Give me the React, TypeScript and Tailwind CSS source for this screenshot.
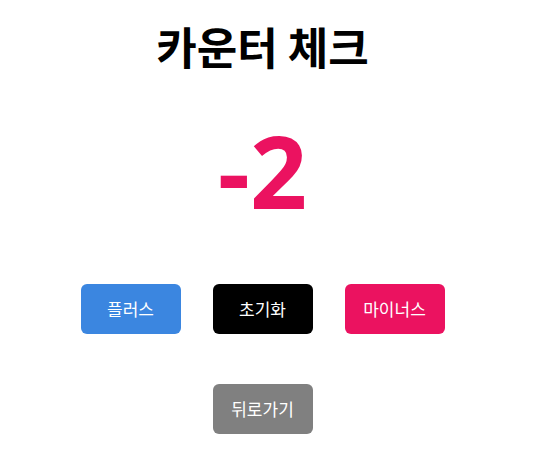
const App = () => {
    return (
        <div
            className="w-full flex flex-col items-center pr-[8px]"
            style={{ fontFamily: '"Noto Sans CJK KR", "Noto Sans", sans-serif' }}
        >
            <h1 className="mt-[18px] text-[44px] font-bold leading-[56px] text-black">카운터 체크</h1>
            <div
                className="mt-[36px] text-[100px] font-bold leading-[120px] text-[#eb1260]"
                style={{ fontFamily: '"Open Sans", sans-serif' }}
            >
                -2
            </div>
            <div className="mt-[54px] flex gap-8">
                <button className="w-[100px] h-[50px] rounded-md bg-[#3b86e0] text-white text-[17px]">플러스</button>
                <button className="w-[100px] h-[50px] rounded-md bg-black text-white text-[17px]">초기화</button>
                <button className="w-[100px] h-[50px] rounded-md bg-[#eb1260] text-white text-[17px]">마이너스</button>
            </div>
            <button className="mt-[50px] w-[100px] h-[50px] rounded-md bg-[#808080] text-white text-[17px]">뒤로가기</button>
        </div>
    );
};

export default App;
